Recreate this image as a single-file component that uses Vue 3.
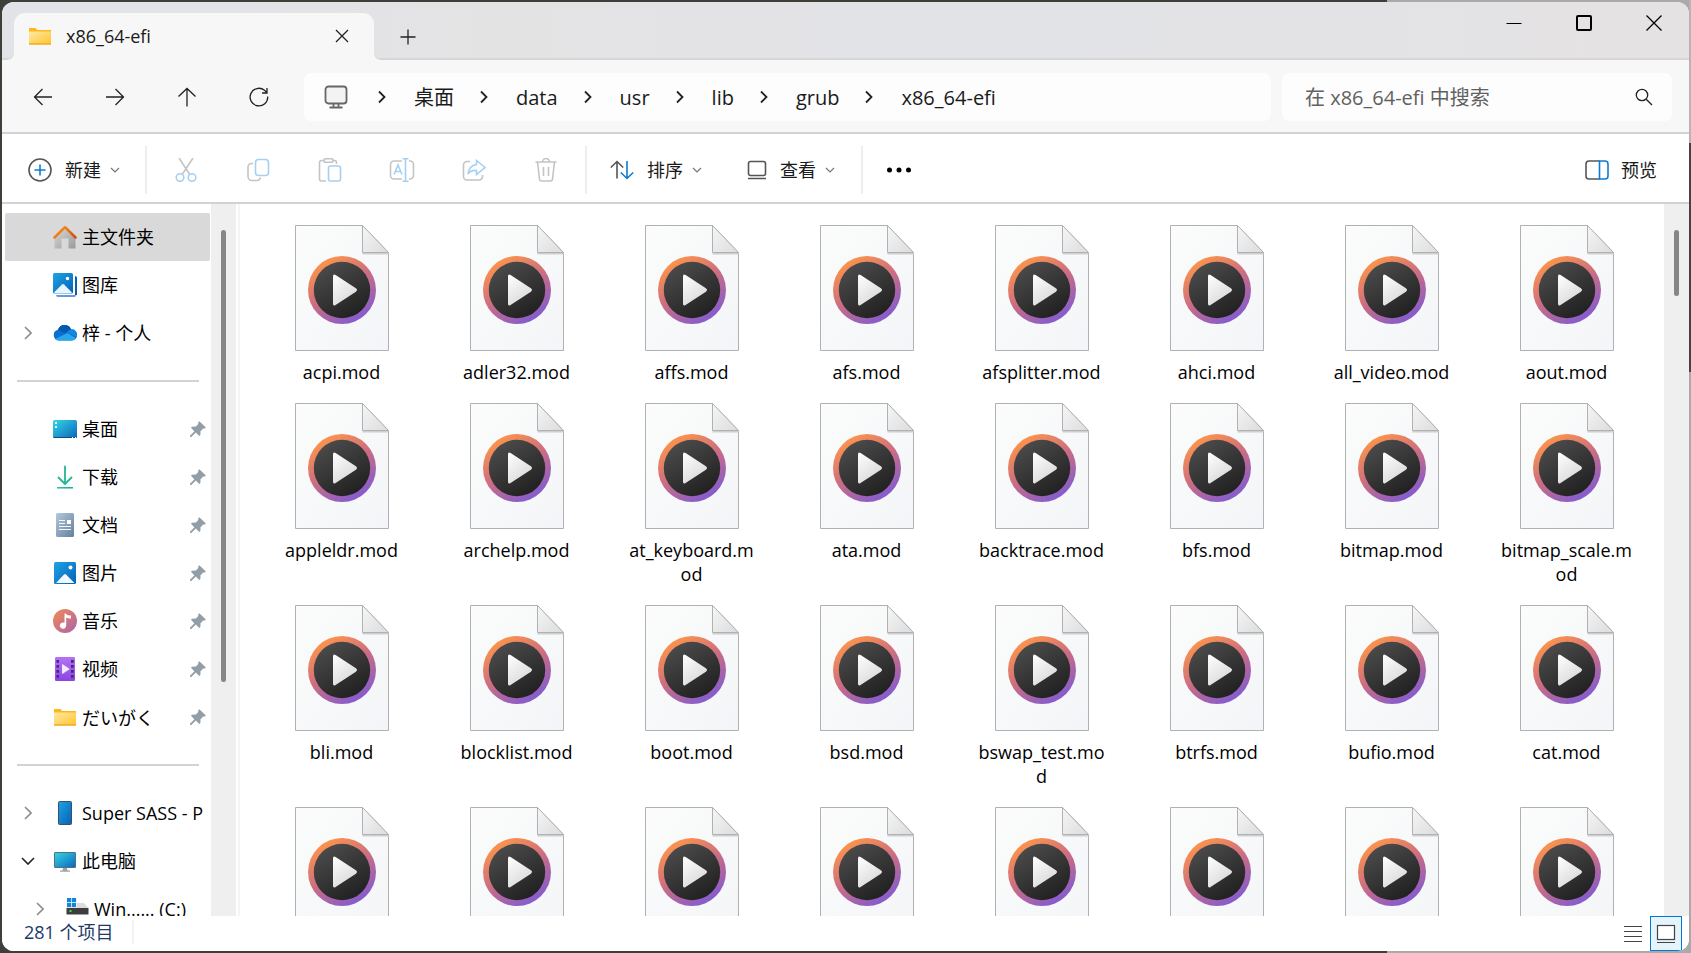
<script setup>
import { ref } from 'vue'

const search = ref('')
const crumbs = ['桌面', 'data', 'usr', 'lib', 'grub', 'x86_64-efi']

const sidebar = [
  { label: '主文件夹', icon: 'home', active: true },
  { label: '图库', icon: 'gallery' },
  { label: '梓 - 个人', icon: 'cloud', arrow: 'right' },
  { divider: true },
  { label: '桌面', icon: 'desktop', pin: true },
  { label: '下载', icon: 'download', pin: true },
  { label: '文档', icon: 'document', pin: true },
  { label: '图片', icon: 'picture', pin: true },
  { label: '音乐', icon: 'music', pin: true },
  { label: '视频', icon: 'video', pin: true },
  { label: 'だいがく', icon: 'folder', pin: true, lang: 'ja' },
  { divider: true },
  { label: 'Super SASS - P', icon: 'phone', arrow: 'right' },
  { label: '此电脑', icon: 'computer', arrow: 'down' },
  { label: 'Win...... (C:)', icon: 'drive', arrow: 'right', nested: true }
]

const files = [
  'acpi', 'adler32', 'affs', 'afs', 'afsplitter', 'ahci', 'all_video', 'aout',
  'appleldr', 'archelp', 'at_keyboard', 'ata', 'backtrace', 'bfs', 'bitmap', 'bitmap_scale',
  'bli', 'blocklist', 'boot', 'bsd', 'bswap_test', 'btrfs', 'bufio', 'cat',
  'cbfs', 'cbls', 'cbmemc', 'cbtable', 'cbtime', 'chain', 'cmdline', 'cmp'
].map((name) => name + '.mod')
</script>

<template>
  <div class="desktop">
    <svg class="defs" aria-hidden="true">
      <defs>
        <linearGradient id="g-folder" x1="0" y1="0" x2="1" y2="1"><stop offset="0" stop-color="#ffe9a6" /><stop offset="1" stop-color="#ffc62e" /></linearGradient>
        <linearGradient id="g-blue" x1="0" y1="0" x2="1" y2="1"><stop offset="0" stop-color="#1ea3e6" /><stop offset="1" stop-color="#0562b5" /></linearGradient>
        <linearGradient id="g-teal" x1="0" y1="0" x2="1" y2="1"><stop offset="0" stop-color="#36d6e4" /><stop offset="1" stop-color="#0966bd" /></linearGradient>
        <linearGradient id="g-green" x1="0" y1="0" x2="1" y2="1"><stop offset="0" stop-color="#32cc96" /><stop offset="1" stop-color="#0f9b9b" /></linearGradient>
        <linearGradient id="g-slate" x1="0" y1="0" x2="1" y2="1"><stop offset="0" stop-color="#b3c9dc" /><stop offset="1" stop-color="#647f9e" /></linearGradient>
        <linearGradient id="g-music" x1="0" y1="0" x2="1" y2="1"><stop offset="0" stop-color="#f58a52" /><stop offset="1" stop-color="#a964ad" /></linearGradient>
        <linearGradient id="g-video" x1="0" y1="0" x2="0" y2="1"><stop offset="0" stop-color="#b473f4" /><stop offset="1" stop-color="#8a45e2" /></linearGradient>
        <linearGradient id="g-roof" x1="0" y1="0" x2="1" y2="0"><stop offset="0" stop-color="#ee7c16" /><stop offset=".5" stop-color="#ee8412" /><stop offset="1" stop-color="#d44a12" /></linearGradient>
        <linearGradient id="g-wall" x1="0" y1="0" x2="1" y2="1"><stop offset="0" stop-color="#d9d9d9" /><stop offset="1" stop-color="#999" /></linearGradient>
        <linearGradient id="g-ring" x1=".2" y1=".05" x2=".75" y2=".95"><stop offset="0" stop-color="#ff9648" /><stop offset=".5" stop-color="#cb6d83" /><stop offset="1" stop-color="#835bd0" /></linearGradient>
        <linearGradient id="g-disc" x1=".2" y1="0" x2=".8" y2="1"><stop offset="0" stop-color="#4d4d4d" /><stop offset="1" stop-color="#1e1e1e" /></linearGradient>
        <linearGradient id="g-play" x1="0" y1="0" x2=".6" y2="1"><stop offset="0" stop-color="#fff" /><stop offset="1" stop-color="#d9d9d9" /></linearGradient>
        <linearGradient id="g-page" x1="0" y1="0" x2="1" y2="1"><stop offset="0" stop-color="#fbfcfb" /><stop offset="1" stop-color="#f3f5f8" /></linearGradient>
        <linearGradient id="g-fold" x1="0" y1="0" x2="1" y2="1"><stop offset="0" stop-color="#f6f6f6" /><stop offset="1" stop-color="#dcdcdc" /></linearGradient>
      </defs>

      <symbol id="i-folder" viewBox="0 0 24 24">
        <path d="M1 4h6.5l1.8 2H23v14.500H1z" fill="#ffb81c" />
        <path d="M1 7.500h22v12H1z" fill="url(#g-folder)" />
        <path d="M1 20h22" stroke="#e9a420" />
      </symbol>
      <symbol id="i-home" viewBox="0 0 24 24">
        <path d="M1.500 12 12 3l10.500 9v11.500h-7V13.500h-7v10h-7z" fill="url(#g-wall)" />
        <path d="M1.500 12.500 12 2.200l10.500 10.300" fill="none" stroke="url(#g-roof)" stroke-width="2.500" stroke-linecap="round" stroke-linejoin="round" />
      </symbol>
      <symbol id="i-gallery" viewBox="0 0 24 24">
        <path d="M22 3a2 2 0 0 1 2 2v17l-2 .5z" fill="#0a5eb0" />
        <path d="M3 22h19l1 .5-1 1.500H5q-2 0-2-2z" fill="#5f9bdd" />
        <rect width="20" height="20.500" rx="1.500" fill="url(#g-blue)" />
        <path d="M1 19.500 9 11.500q1-1 2 0l8 8-1 .7H2z" fill="#e8f5ff" />
        <circle cx="14.500" cy="5.500" r="1.700" fill="#fff" />
      </symbol>
      <symbol id="i-cloud" viewBox="0 0 24 24">
        <path d="M5.500 19.500A5.500 5.500 0 0 1 5 8.700a7 7 0 0 1 13-.4 5.600 5.600 0 0 1 1 11.200z" fill="#0a6fce" />
        <path d="M5 8.700a7 7 0 0 1 13-.4L12 12z" fill="#0559ae" />
        <path d="M18 8.300a5.600 5.600 0 0 1 5.500 8l-9.500-5.300z" fill="#1488df" />
        <path d="m2 18 12.500-6 8.500 5.300a5 5 0 0 1-4 2.200H5.500A5 5 0 0 1 2 18z" fill="#28a7ec" />
      </symbol>
      <symbol id="i-desktop" viewBox="0 0 24 24">
        <rect y="3" width="24" height="18" rx="1.500" fill="url(#g-teal)" />
        <path d="M2 5h2v2H2zM2 9h2v2H2z" fill="#dffaff" />
        <path d="M.5 20.500h23" stroke="#0a4d85" />
        <path d="M19 20.500h1M22 20.500h1" stroke="#fff" />
      </symbol>
      <symbol id="i-download" viewBox="0 0 24 24">
        <path d="M12 1.500v17M5.500 12.500l6.500 6.500 6.500-6.500" fill="none" stroke="#22b795" stroke-width="1.800" stroke-linejoin="round" stroke-linecap="round" />
        <path d="M4 22h16v1.500H4z" fill="url(#g-green)" />
      </symbol>
      <symbol id="i-document" viewBox="0 0 24 24">
        <rect x="3" width="18" height="24" rx="1.500" fill="url(#g-slate)" />
        <path d="M6 7.500h6M6 10.500h6M6 13.500h12M6 16.500h12" stroke="#f4f8fb" />
        <path d="M14 7h4v4h-4z" fill="#fff" />
      </symbol>
      <symbol id="i-picture" viewBox="0 0 24 24">
        <rect x="1" y="1" width="22" height="22" rx="1.500" fill="url(#g-blue)" />
        <path d="m3 22 8-8.500q1-1 2 0l8.500 8.500z" fill="#f1f8ff" />
        <circle cx="17.500" cy="6.500" r="2" fill="#fff" />
      </symbol>
      <symbol id="i-music" viewBox="0 0 24 24">
        <circle cx="12" cy="12" r="12" fill="url(#g-music)" />
        <path d="M11.500 4.500h1.300q1 2.500 5.200 2v3q-3 .4-4.800-1V16.500a3.200 3.200 0 1 1-1.700-2.700z" fill="#fff" />
      </symbol>
      <symbol id="i-video" viewBox="0 0 24 24">
        <rect x="2" width="20" height="24" rx="1.200" fill="url(#g-video)" />
        <path d="M3.500 3h2.500v2.700H3.500zm0 5h2.500v2.700H3.500zm0 5h2.500v2.700H3.500zm0 5h2.500v2.700H3.500zM18 3h2.700v2.700H18zm0 5h2.700v2.700H18zm0 5h2.700v2.700H18zm0 5h2.700v2.700H18z" fill="#46277f" />
        <path d="M9 7.500q0-.7.700-.3l6.500 4.400q.5.400 0 .8L9.700 16.800q-.7.400-.7-.3z" fill="#f0eafa" />
      </symbol>
      <symbol id="i-phone" viewBox="0 0 24 24">
        <rect x="5.500" y=".5" width="13" height="23" rx="1" fill="url(#g-blue)" stroke="#3b5068" />
      </symbol>
      <symbol id="i-computer" viewBox="0 0 24 24">
        <path d="M10 19h4l.5 2.500H17v1.200H7v-1.200h2.500z" fill="#9aa4ad" />
        <rect x="1.500" y="3.500" width="21" height="15" rx=".5" fill="url(#g-teal)" stroke="#56707f" />
      </symbol>
      <symbol id="i-drive" viewBox="0 0 24 24">
        <path d="M2 1h4.200v4.200H2zm4.900 0h4.200v4.200H6.900zM2 5.900h4.200v4.200H2zm4.900 0h4.200v4.200H6.900z" fill="#1287d8" />
        <path d="M12 6h7l4.500 5H2l.5-.8H12z" fill="#dcdcdc" />
        <path d="M1.500 11h22v6.500h-22z" fill="#3d3d3d" />
        <path d="M4.500 13h2v2h-2z" fill="#3fe04a" />
      </symbol>
      <symbol id="i-pin" viewBox="0 0 16 16">
        <path d="M9.300.3 15.800 6.500l-.8 1-1.800.1-2.700 2.700-.1 3.700-1.100.9-3.500-3.500L1.300 16H0v-1.300l4.400-4.500L1 6.700l.9-1 3.900-.2 2.500-2.400V1.200z" fill="#929da5" />
      </symbol>
      <symbol id="i-page" viewBox="0 0 94 126">
        <path d="M.5.500h67l26 27v98H.5z" fill="url(#g-page)" stroke="#b0b1b2" />
        <path d="M67.500 28.500h26" stroke="#cfcfcf" stroke-width="2" />
        <path d="M67.500.5v27h26z" fill="url(#g-fold)" stroke="#b0b1b2" />
        <circle cx="47" cy="65" r="34" fill="url(#g-ring)" />
        <circle cx="47" cy="65" r="28.200" fill="url(#g-disc)" />
        <path d="M38 51.500q0-3 2.600-1.500l20.300 13.300q2.200 1.700 0 3.400L40.600 80q-2.600 1.500-2.600-1.500z" fill="url(#g-play)" />
      </symbol>
    </svg>

    <div class="window">
      <header class="titlebar">
        <div class="tab">
          <svg class="ic24"><use href="#i-folder" /></svg>
          <span class="tab-title">x86_64-efi</span>
          <button class="plain tab-close" aria-label="关闭标签页">
            <svg width="14" height="14" viewBox="0 0 14 14" class="line"><path d="m1 1 12 12M13 1 1 13" /></svg>
          </button>
        </div>
        <button class="plain new-tab" aria-label="新标签页">
          <svg width="16" height="16" viewBox="0 0 16 16" class="line"><path d="M8 .5v15M.5 8h15" /></svg>
        </button>
        <div class="caption">
          <button class="plain" aria-label="最小化"><svg width="16" height="16" viewBox="0 0 16 16" class="line black fine"><path d="M.5 8.500h15" /></svg></button>
          <button class="plain" aria-label="最大化"><svg width="16" height="16" viewBox="0 0 16 16" class="line black thick"><rect x="1" y="1" width="14" height="14" rx="1" /></svg></button>
          <button class="plain" aria-label="关闭"><svg width="16" height="16" viewBox="0 0 16 16" class="line black"><path d="m.5.500 15 15M15.500.5l-15 15" /></svg></button>
        </div>
      </header>

      <nav class="navbar">
        <div class="nav-buttons">
          <button class="plain" aria-label="后退"><svg width="20" height="20" viewBox="0 0 20 20" class="line"><path d="M19 10H1.500M9.500 2l-8 8 8 8" /></svg></button>
          <button class="plain" aria-label="前进"><svg width="20" height="20" viewBox="0 0 20 20" class="line"><path d="M1 10h17.500M10.500 2l8 8-8 8" /></svg></button>
          <button class="plain" aria-label="向上"><svg width="20" height="20" viewBox="0 0 20 20" class="line"><path d="M10 19.500V1.500M1.500 9.500l8.500-8 8.500 8" /></svg></button>
          <button class="plain" aria-label="刷新"><svg width="20" height="20" viewBox="0 0 20 20" class="line"><path d="M18.700 9.500a8.800 8.800 0 1 1-3.200-6.200l2.200 2M18 1v5h-5" /></svg></button>
        </div>
        <div class="address">
          <svg width="24" height="24" viewBox="0 0 24 24" class="monitor"><rect x="1.500" y="1.500" width="21" height="17" rx="3" /><path d="M9.500 19v3M14.500 19v3M5.500 22.500h13" /></svg>
          <template v-for="c in crumbs" :key="c">
            <svg width="8" height="14" viewBox="0 0 8 14" class="line crumb-arrow"><path d="m1 1.500 5.500 5.500L1 12.500" /></svg>
            <a href="#" class="crumb">{{ c }}</a>
          </template>
        </div>
        <div class="search">
          <input v-model="search" type="text" aria-label="搜索" placeholder="在 x86_64-efi 中搜索" />
          <button class="plain" aria-label="开始搜索"><svg width="18" height="18" viewBox="0 0 18 18" class="line"><circle cx="7" cy="7" r="5.700" /><path d="m11.200 11.200 5.800 5.800" /></svg></button>
        </div>
      </nav>

      <div class="toolbar">
        <button class="plain labelled new">
          <svg width="24" height="24" viewBox="0 0 24 24" class="tool"><circle cx="12" cy="12" r="11" class="dark" /><path d="M12 6.500v11M6.500 12h11" class="accent" /></svg>
          <span>新建</span>
          <svg width="10" height="6" viewBox="0 0 10 6" class="tool"><path d="m1 1 4 4 4-4" class="thin" /></svg>
        </button>
        <i class="sep"></i>
        <div class="tools">
          <button class="plain" disabled aria-label="剪切"><svg width="24" height="24" viewBox="0 0 24 24" class="tool"><path d="m5 0 10.500 16M19 0 8.500 16" class="gray" /><circle cx="6" cy="19.500" r="3.800" class="pale" /><circle cx="18" cy="19.500" r="3.800" class="pale" /></svg></button>
          <button class="plain" disabled aria-label="复制"><svg width="24" height="24" viewBox="0 0 24 24" class="tool"><path d="M7 5.500H5.500a3.500 3.500 0 0 0-3.500 3.500v9.500a4 4 0 0 0 4 4h5a3.500 3.500 0 0 0 3.500-3" class="gray" /><rect x="9.500" y="1.500" width="13" height="16" rx="3" class="pale" /></svg></button>
          <button class="plain" disabled aria-label="粘贴"><svg width="24" height="24" viewBox="0 0 24 24" class="tool"><path d="M6 2.500H3.500a2 2 0 0 0-2 2V21a2 2 0 0 0 2 2H8M15 2.500h1.500a2 2 0 0 1 2 2V6" class="gray" /><rect x="6" y=".7" width="9" height="3.600" rx="1.800" class="gray" /><rect x="10.500" y="8" width="12" height="15" rx="2" class="pale" /></svg></button>
          <button class="plain" disabled aria-label="重命名"><svg width="26" height="24" viewBox="0 0 26 24" class="tool"><path d="M13 3H5a3.500 3.500 0 0 0-3.500 3.500v11A3.500 3.500 0 0 0 5 21h8M20 3h1a3.500 3.500 0 0 1 3.500 3.500v11A3.500 3.500 0 0 1 21 21h-1" class="gray" /><path d="M5 16.500 9 7l4 9.500M6.500 13.500h5M16.500 1v22M13.500.8h6M13.500 23.200h6" class="pale" /></svg></button>
          <button class="plain" disabled aria-label="共享"><svg width="24" height="24" viewBox="0 0 24 24" class="tool"><path d="M8 3.500H5A3.500 3.500 0 0 0 1.500 7v11.500A3.500 3.500 0 0 0 5 22h12a3.500 3.500 0 0 0 3.500-3.500V17" class="gray" /><path d="M14.500 2.500 23 9.500l-8.500 7v-4q-5.500-.7-8.500 3.500Q7 7.500 14.500 6.500z" class="pale" /></svg></button>
          <button class="plain" disabled aria-label="删除"><svg width="24" height="24" viewBox="0 0 24 24" class="tool"><path d="M1.500 4h21M8.500 4a3.500 3.500 0 0 1 7 0M3.500 4l2 17a2.200 2.200 0 0 0 2.200 2h8.600a2.200 2.200 0 0 0 2.200-2l2-17M9.500 9v9M14.500 9v9" class="gray" /></svg></button>
        </div>
        <i class="sep"></i>
        <button class="plain labelled sort">
          <svg width="24" height="20" viewBox="0 0 24 20" class="tool"><path d="M7 18.500V1.500M.8 7.500l6.200-6 6.200 6" class="dark" /><path d="M17 1v17.500M10.800 12.500l6.200 6 6.200-6" class="accent" /></svg>
          <span>排序</span>
          <svg width="10" height="6" viewBox="0 0 10 6" class="tool"><path d="m1 1 4 4 4-4" class="thin" /></svg>
        </button>
        <button class="plain labelled view">
          <svg width="20" height="20" viewBox="0 0 20 20" class="tool"><rect x="1.500" y="1.500" width="17" height="14" rx="2" class="dark" /><path d="M1 18.500h18" class="dark" /></svg>
          <span>查看</span>
          <svg width="10" height="6" viewBox="0 0 10 6" class="tool"><path d="m1 1 4 4 4-4" class="thin" /></svg>
        </button>
        <i class="sep"></i>
        <button class="plain more" aria-label="更多"><svg width="26" height="6" viewBox="0 0 26 6"><circle cx="3.500" cy="3" r="2.500" /><circle cx="13" cy="3" r="2.500" /><circle cx="22.500" cy="3" r="2.500" /></svg></button>
        <button class="plain labelled preview">
          <svg width="24" height="20" viewBox="0 0 24 20" class="tool"><path d="M14.500 1H4a3 3 0 0 0-3 3v12a3 3 0 0 0 3 3h10.500" class="dark" /><path d="M14.500 1H20a3 3 0 0 1 3 3v12a3 3 0 0 1-3 3h-5.500z" class="accent" /></svg>
          <span>预览</span>
        </button>
      </div>

      <main class="body">
        <aside class="side">
          <ul class="tree">
            <li v-for="(s, i) in sidebar" :key="i" :class="{ divider: s.divider }">
              <a v-if="!s.divider" href="#" class="node" :class="{ active: s.active, nested: s.nested }" :lang="s.lang">
                <span class="arrow">
                  <svg v-if="s.arrow === 'right'" width="8" height="14" viewBox="0 0 8 14" class="expand"><path d="m1 1 6 6-6 6" /></svg>
                  <svg v-if="s.arrow === 'down'" width="14" height="8" viewBox="0 0 14 8" class="expand open"><path d="m1 1 6 6 6-6" /></svg>
                </span>
                <svg class="ic24"><use :href="'#i-' + s.icon" /></svg>
                <span class="node-label">{{ s.label }}</span>
                <svg v-if="s.pin" class="pin"><use href="#i-pin" /></svg>
              </a>
            </li>
          </ul>
          <div class="scroll"><div class="thumb side-thumb"></div></div>
        </aside>
        <section class="content">
          <ul class="grid">
            <li v-for="f in files" :key="f">
              <button class="plain file">
                <svg class="page"><use href="#i-page" /></svg>
                <span>{{ f }}</span>
              </button>
            </li>
          </ul>
        </section>
        <div class="scroll"><div class="thumb main-thumb"></div></div>
      </main>

      <footer class="status">
        <span class="count">281 个项目</span>
        <button class="plain mode" aria-label="详细信息"><svg width="20" height="18" viewBox="0 0 20 18"><path d="M1 1.500h18M1 6.500h18M1 11.500h18M1 16.500h18" /></svg></button>
        <button class="plain mode on" aria-label="大图标"><svg width="20" height="20" viewBox="0 0 20 20"><rect x="1.500" y="1.500" width="17" height="14" fill="#fff" /><path d="M1 18.500h18" /></svg></button>
      </footer>
    </div>
  </div>
</template>

<style>
body {
  margin: 0;
  overflow: hidden;
}
</style>

<style scoped>
* {
  box-sizing: border-box;
}
.desktop {
  height: 100vh;
  padding: 2px;
  background:
    linear-gradient(#b5b5b5 15%, #43433f 15%, #43433f 39%, #a9a9a9 39%) right / 2px 100% no-repeat,
    linear-gradient(90deg, #3f3f3a 82%, #aaa 82%);
  font: 18px/24px "Open Sans", "Noto Sans CJK SC", sans-serif;
  color: #1a1a1a;
}
.desktop [lang='ja'] {
  font-family: "Noto Sans CJK JP", sans-serif;
}
.defs {
  position: absolute;
  width: 0;
  height: 0;
}
.window {
  display: flex;
  flex-direction: column;
  height: 100%;
  overflow: hidden;
  border-radius: 12px;
  background: #fff;
}
.plain {
  display: flex;
  align-items: center;
  justify-content: center;
  padding: 0;
  border: 0;
  background: none;
  font: inherit;
  color: inherit;
}
ul {
  margin: 0;
  padding: 0;
  list-style: none;
}
svg {
  flex: none;
}
.ic24 {
  width: 24px;
  height: 24px;
}
.line {
  fill: none;
  stroke: #222;
  stroke-width: 1.3;
}
.line.black {
  stroke: #000;
}
.line.fine {
  stroke-width: 1;
}
.line.thick {
  stroke-width: 2;
}

.titlebar {
  display: flex;
  flex: none;
  height: 58px;
  padding-left: 12px;
  background: linear-gradient(90deg, #e1e3e8, #e4e3e4 30%, #e2e3e7 55%, #e3e3e5 80%, #e5e2e3);
  box-shadow: inset 0 -2px #d6d6d8;
}
.tab {
  position: relative;
  display: flex;
  align-items: center;
  width: 360px;
  margin-top: 11px;
  padding: 0 20px 2px 14px;
  border-radius: 11px 11px 0 0;
  background: #f7f7f7;
}
.tab::before,
.tab::after {
  content: '';
  position: absolute;
  bottom: 0;
  width: 6px;
  height: 6px;
}
.tab::before {
  right: 100%;
  background: radial-gradient(circle at 0 0, transparent 4px, #d6d6d8 5px, #f7f7f7 6px);
}
.tab::after {
  left: 100%;
  background: radial-gradient(circle at 100% 0, transparent 4px, #d6d6d8 5px, #f7f7f7 6px);
}
.tab-title {
  flex: 1;
  margin-left: 14px;
  font-weight: 500;
}
.tab-close,
.new-tab {
  width: 24px;
}
.new-tab {
  margin: 11px 0 0 22px;
}
.caption {
  display: flex;
  height: 41px;
  margin-left: auto;
}
.caption .plain {
  width: 70px;
}

.navbar {
  display: flex;
  align-items: center;
  flex: none;
  height: 74px;
  padding: 2px 17px 0 5px;
  border-bottom: 2px solid #d2d2d4;
  background: #f7f7f7;
}
.nav-buttons {
  display: flex;
  width: 297px;
}
.nav-buttons .plain {
  width: 72px;
  height: 48px;
}
.address,
.search {
  display: flex;
  align-items: center;
  height: 48px;
  border-radius: 7px;
  background: #fdfdfd;
  font-size: 20px;
}
.address {
  flex: 1;
  padding-left: 20px;
}
.monitor {
  fill: #f3f3f3;
  stroke: #666;
  stroke-width: 1.8;
}
.crumb-arrow {
  margin: 0 28px 0 26px;
  stroke-width: 1.8;
}
.monitor + .crumb-arrow {
  margin-left: 30px;
}
.crumb {
  padding-top: 1px;
  color: inherit;
  text-decoration: none;
}
.search {
  width: 390px;
  margin-left: 11px;
  padding: 0 19px 0 23px;
}
.search input {
  flex: 1;
  min-width: 0;
  padding: 1px 0 0;
  border: 0;
  outline: 0;
  background: none;
  font: inherit;
}
.search input::placeholder {
  color: #616161;
  opacity: 1;
}

.toolbar {
  display: flex;
  align-items: center;
  flex: none;
  height: 70px;
  padding: 4px 32px 0 26px;
  border-bottom: 2px solid #d2d2d4;
  background: #fff;
}
.tool {
  fill: none;
  stroke-width: 1.6;
}
.dark {
  stroke: #555;
}
.accent {
  stroke: #0a7cd6;
}
.thin {
  stroke: #777;
  stroke-width: 1.2;
}
.gray {
  stroke: #c4c4c4;
}
.pale {
  stroke: #a5d0f2;
}
.labelled {
  gap: 13px;
}
.labelled svg:last-child {
  margin-left: -4px;
}
.sep {
  width: 2px;
  height: 48px;
  background: #ededed;
}
.new {
  width: 92px;
  margin-right: 25px;
}
.tools {
  display: flex;
  width: 438px;
  padding-left: 3px;
}
.tools .plain {
  width: 72px;
  height: 48px;
}
.sort {
  margin-left: 23px;
}
.view {
  margin: 0 26px 0 45px;
}
.more {
  width: 72px;
}
.labelled.preview {
  gap: 12px;
  margin-left: auto;
}

.body {
  display: flex;
  flex: 1;
  min-height: 0;
  overflow: hidden;
}
.side {
  display: flex;
  flex: none;
  width: 238px;
  border-right: 2px solid #f5f5f5;
}
.tree {
  width: 209px;
  padding-top: 9px;
  overflow: hidden;
}
.tree li {
  height: 48px;
}
.divider {
  display: flex;
  align-items: center;
}
.divider::before {
  content: '';
  flex: 1;
  height: 2px;
  margin: 0 12px 0 15px;
  background: #d3d3d3;
}
.node {
  display: flex;
  align-items: center;
  height: 48px;
  margin: 0 1px 0 3px;
  padding-right: 4px;
  border-radius: 2px;
  color: #000;
  text-decoration: none;
  white-space: nowrap;
}
.node.active {
  background: #d9d9d9;
}
.arrow {
  display: flex;
  justify-content: center;
  width: 46px;
  margin-right: 2px;
}
.nested .arrow {
  width: 58px;
  padding-left: 12px;
}
.expand {
  fill: none;
  stroke: #8c8c8c;
  stroke-width: 1.6;
}
.expand.open {
  stroke: #222;
}
.node-label {
  margin-left: 5px;
}
.pin {
  width: 16px;
  height: 16px;
  margin-left: auto;
}
.scroll {
  flex: none;
  width: 25px;
  padding: 26px 10px 0;
  background: #efefef;
}
.side .scroll {
  margin-right: 2px;
}
.thumb {
  border-radius: 3px;
  background: #868686;
}
.side-thumb {
  height: 452px;
}
.main-thumb {
  height: 66px;
}
.content {
  flex: 1;
  min-width: 0;
  overflow: hidden;
}
.grid {
  display: grid;
  grid-template-columns: repeat(auto-fill, 175px);
  row-gap: 19px;
  padding: 21px 0 0 14px;
}
.file {
  flex-direction: column;
  gap: 9px;
  width: 100%;
  color: #000;
}
.page {
  width: 94px;
  height: 126px;
}
.file span {
  width: 133px;
  word-break: break-all;
}

.status {
  display: flex;
  flex: none;
  height: 35px;
  padding: 0 7px 0 22px;
  background: #fff;
  color: #1e3a66;
}
.count {
  height: 24px;
  margin: 4px auto 0 0;
  padding-right: 18px;
  border-right: 2px solid #f3f3f3;
}
.mode {
  width: 34px;
  fill: none;
  stroke: #444;
  stroke-width: 1.2;
}
.mode.on {
  width: 32px;
  border: 1px solid #0078d4;
  background: #e5f3fb;
}
</style>
